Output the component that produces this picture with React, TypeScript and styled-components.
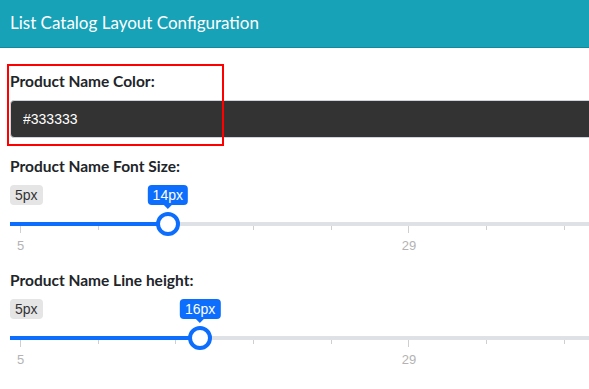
import styled, { createGlobalStyle } from 'styled-components'

const GlobalStyle = createGlobalStyle`
  html, body {
    margin: 0;
    padding: 0;
    overflow: hidden;
    background: #fff;
  }
  * {
    box-sizing: border-box;
  }
`

const MIN = 5
const MAX = 53
const STEP_PX = 16.2

type SliderProps = {
  value: number
}

const RangeSlider = ({ value }: SliderProps) => {
  const center = 12 + (value - MIN) * STEP_PX
  const ticks = Array.from({ length: 11 }, (_, i) => i)
  return (
    <SliderWrap>
      <BadgeRow>
        <MinBadge>{MIN}px</MinBadge>
        <ValueTip style={{ left: center }}>{value}px</ValueTip>
      </BadgeRow>
      <Rail>
        <Track>
          <Fill style={{ width: center }} />
          <Thumb style={{ left: center - 12 }} />
        </Track>
      </Rail>
      <Grid>
        {ticks.map((i) => {
          const major = i % 5 === 0
          return (
            <Tick key={i}>
              <TickLine $major={major} />
              {major && <TickLabel>{Math.round(MIN + ((MAX - MIN) / 10) * i)}</TickLabel>}
            </Tick>
          )
        })}
      </Grid>
    </SliderWrap>
  )
}

export default function App() {
  return (
    <>
      <GlobalStyle />
      <Page>
        <Header>
          <Title>List Catalog Layout Configuration</Title>
        </Header>
        <Form>
          <FieldGroup>
            <Label>Product Name Color:</Label>
            <ColorInput type="text" value="#333333" readOnly />
            <Highlight />
          </FieldGroup>
          <FieldGroup>
            <Label>Product Name Font Size:</Label>
            <RangeSlider value={14} />
          </FieldGroup>
          <FieldGroup>
            <Label>Product Name Line height:</Label>
            <RangeSlider value={16} />
          </FieldGroup>
          <FieldGroup>
            <Label>Product Link Color:</Label>
          </FieldGroup>
        </Form>
      </Page>
    </>
  )
}

const Page = styled.div`
  width: 820px;
  font-family: Lato, 'Noto Sans', sans-serif;
  color: #212529;
`

const Header = styled.header`
  height: 48px;
  background-color: #17a2b8;
  border-bottom: 1px solid #138a9c;
  display: flex;
  align-items: center;
  padding: 0 10px 2px;
`

const Title = styled.h1`
  margin: 0;
  font-size: 17px;
  font-weight: 400;
  color: #fff;
`

const Form = styled.div`
  display: flex;
  flex-direction: column;
  gap: 18px;
  padding: 23px 10px 0;
`

const FieldGroup = styled.div`
  position: relative;
  display: flex;
  flex-direction: column;
`

const Label = styled.label`
  font-size: 15.5px;
  font-weight: 700;
  line-height: 20px;
  color: #212529;
`

const ColorInput = styled.input`
  margin-top: 9px;
  height: 38px;
  width: 100%;
  background-color: #333333;
  border: 1px solid #ced4da;
  border-radius: 4px;
  padding: 0 12px;
  color: #fff;
  font-family: 'Liberation Sans', Arial, sans-serif;
  font-size: 14px;
  outline: none;
`

const Highlight = styled.div`
  position: absolute;
  top: -7px;
  left: -3px;
  width: 217px;
  height: 82px;
  border: 2px solid #ff0000;
  pointer-events: none;
`

const SliderWrap = styled.div`
  display: flex;
  flex-direction: column;
  margin-top: 9px;
`

const BadgeRow = styled.div`
  position: relative;
  height: 20px;
  display: flex;
  align-items: center;
`

const MinBadge = styled.span`
  height: 20px;
  padding: 0 5px;
  border-radius: 4px;
  background-color: #e5e5e5;
  color: #333;
  font-family: 'Liberation Sans', Arial, sans-serif;
  font-size: 14px;
  line-height: 20px;
`

const ValueTip = styled.span`
  position: absolute;
  top: 0;
  transform: translateX(-50%);
  height: 20px;
  padding: 0 5px;
  border-radius: 4px;
  background-color: #0d6efd;
  color: #fff;
  font-family: 'Liberation Sans', Arial, sans-serif;
  font-size: 14px;
  line-height: 20px;
  &::after {
    content: '';
    position: absolute;
    left: 50%;
    bottom: -4px;
    margin-left: -4px;
    border-left: 4px solid transparent;
    border-right: 4px solid transparent;
    border-top: 4px solid #0d6efd;
  }
`

const Rail = styled.div`
  padding-top: 17px;
`

const Track = styled.div`
  position: relative;
  height: 4px;
  background-color: #dee2e6;
`

const Fill = styled.div`
  height: 100%;
  background-color: #0d6efd;
`

const Thumb = styled.div`
  position: absolute;
  top: -10px;
  width: 24px;
  height: 24px;
  border-radius: 50%;
  background-color: #fff;
  border: 4px solid #0d6efd;
`

const Grid = styled.div`
  width: 778px;
  margin-left: 10px;
  display: flex;
  justify-content: space-between;
`

const Tick = styled.div`
  width: 1px;
  display: flex;
  flex-direction: column;
  align-items: center;
`

const TickLine = styled.div<{ $major: boolean }>`
  width: 1px;
  height: ${(p) => (p.$major ? '7px' : '4px')};
  background-color: #cfcfcf;
`

const TickLabel = styled.span`
  margin-top: 6px;
  font-family: 'Liberation Sans', Arial, sans-serif;
  font-size: 13px;
  line-height: 13px;
  color: #b3b3b3;
  white-space: nowrap;
`
